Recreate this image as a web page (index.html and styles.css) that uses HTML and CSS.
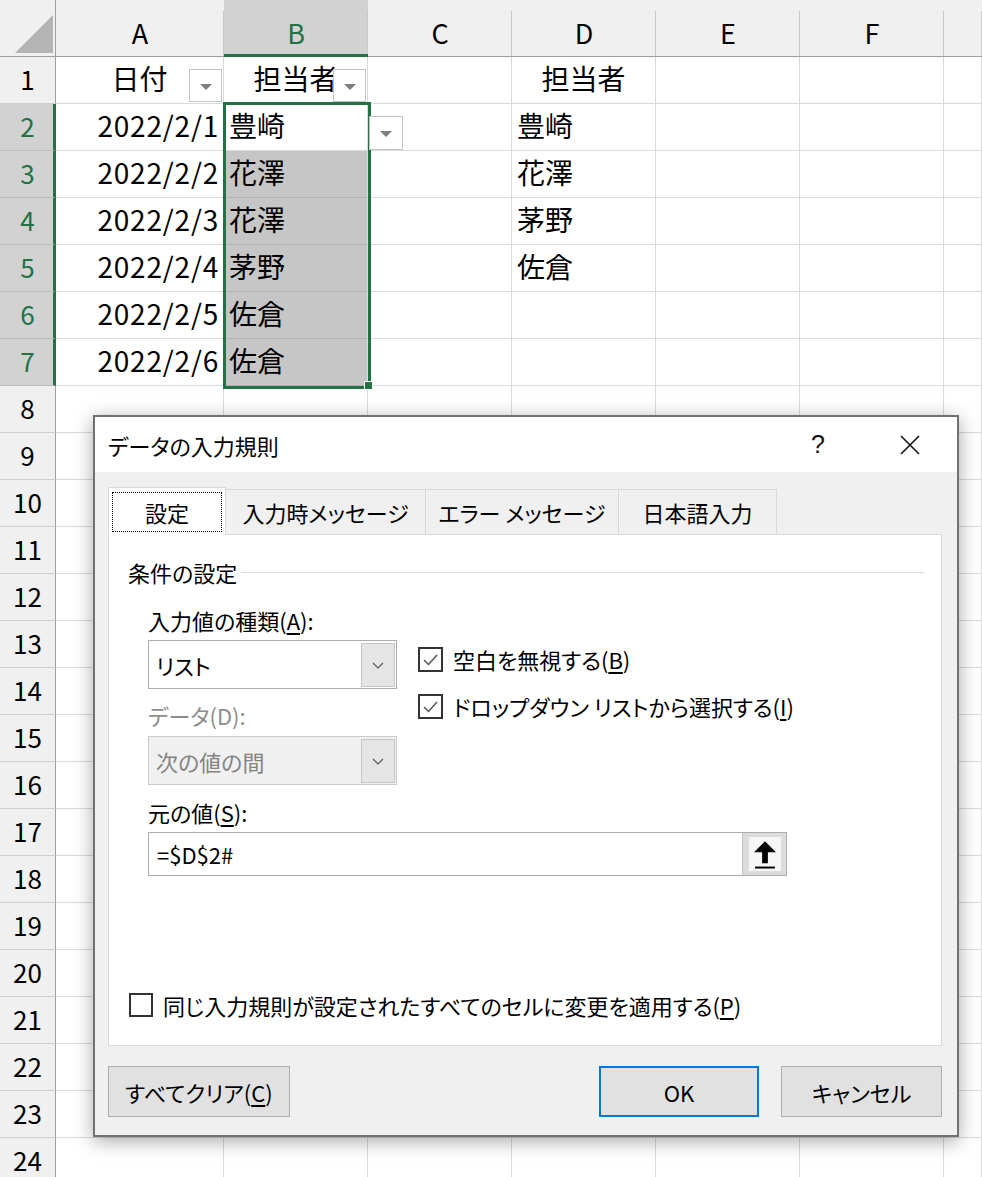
FILE: index.html
```html
<!DOCTYPE html>
<html lang="ja">
<head>
<meta charset="utf-8">
<title>データの入力規則</title>
<link rel="stylesheet" href="styles.css">
</head>
<body>
<div class="page">
  <div class="sheet">
    <div class="corner"><svg width="55" height="56" viewBox="0 0 55 56"><polygon points="15,53 53,53 53,15" fill="#b4b4b4"/></svg></div>
    <div class="colh">A</div>
    <div class="colh sel">B</div>
    <div class="colh">C</div>
    <div class="colh">D</div>
    <div class="colh">E</div>
    <div class="colh">F</div>
    <div class="colh"></div>

    <div class="rowh">1</div>
    <div class="cell center">日付<span class="filter"></span></div>
    <div class="cell center">担当者<span class="filter"></span></div>
    <div class="cell"></div>
    <div class="cell center">担当者</div>
    <div class="cell"></div><div class="cell"></div><div class="cell"></div>

    <div class="rowh sel">2</div>
    <div class="cell num">2022/2/1</div>
    <div class="cell">豊崎</div>
    <div class="cell"></div>
    <div class="cell">豊崎</div>
    <div class="cell"></div><div class="cell"></div><div class="cell"></div>

    <div class="rowh sel">3</div>
    <div class="cell num">2022/2/2</div>
    <div class="cell sel">花澤</div>
    <div class="cell"></div>
    <div class="cell">花澤</div>
    <div class="cell"></div><div class="cell"></div><div class="cell"></div>

    <div class="rowh sel">4</div>
    <div class="cell num">2022/2/3</div>
    <div class="cell sel">花澤</div>
    <div class="cell"></div>
    <div class="cell">茅野</div>
    <div class="cell"></div><div class="cell"></div><div class="cell"></div>

    <div class="rowh sel">5</div>
    <div class="cell num">2022/2/4</div>
    <div class="cell sel">茅野</div>
    <div class="cell"></div>
    <div class="cell">佐倉</div>
    <div class="cell"></div><div class="cell"></div><div class="cell"></div>

    <div class="rowh sel">6</div>
    <div class="cell num">2022/2/5</div>
    <div class="cell sel">佐倉</div>
    <div class="cell"></div><div class="cell"></div>
    <div class="cell"></div><div class="cell"></div><div class="cell"></div>

    <div class="rowh sel">7</div>
    <div class="cell num">2022/2/6</div>
    <div class="cell sel">佐倉</div>
    <div class="cell"></div><div class="cell"></div>
    <div class="cell"></div><div class="cell"></div><div class="cell"></div>

    <div class="rowh">8</div><div class="cell"></div><div class="cell"></div><div class="cell"></div><div class="cell"></div><div class="cell"></div><div class="cell"></div><div class="cell"></div>
    <div class="rowh">9</div><div class="cell"></div><div class="cell"></div><div class="cell"></div><div class="cell"></div><div class="cell"></div><div class="cell"></div><div class="cell"></div>
    <div class="rowh">10</div><div class="cell"></div><div class="cell"></div><div class="cell"></div><div class="cell"></div><div class="cell"></div><div class="cell"></div><div class="cell"></div>
    <div class="rowh">11</div><div class="cell"></div><div class="cell"></div><div class="cell"></div><div class="cell"></div><div class="cell"></div><div class="cell"></div><div class="cell"></div>
    <div class="rowh">12</div><div class="cell"></div><div class="cell"></div><div class="cell"></div><div class="cell"></div><div class="cell"></div><div class="cell"></div><div class="cell"></div>
    <div class="rowh">13</div><div class="cell"></div><div class="cell"></div><div class="cell"></div><div class="cell"></div><div class="cell"></div><div class="cell"></div><div class="cell"></div>
    <div class="rowh">14</div><div class="cell"></div><div class="cell"></div><div class="cell"></div><div class="cell"></div><div class="cell"></div><div class="cell"></div><div class="cell"></div>
    <div class="rowh">15</div><div class="cell"></div><div class="cell"></div><div class="cell"></div><div class="cell"></div><div class="cell"></div><div class="cell"></div><div class="cell"></div>
    <div class="rowh">16</div><div class="cell"></div><div class="cell"></div><div class="cell"></div><div class="cell"></div><div class="cell"></div><div class="cell"></div><div class="cell"></div>
    <div class="rowh">17</div><div class="cell"></div><div class="cell"></div><div class="cell"></div><div class="cell"></div><div class="cell"></div><div class="cell"></div><div class="cell"></div>
    <div class="rowh">18</div><div class="cell"></div><div class="cell"></div><div class="cell"></div><div class="cell"></div><div class="cell"></div><div class="cell"></div><div class="cell"></div>
    <div class="rowh">19</div><div class="cell"></div><div class="cell"></div><div class="cell"></div><div class="cell"></div><div class="cell"></div><div class="cell"></div><div class="cell"></div>
    <div class="rowh">20</div><div class="cell"></div><div class="cell"></div><div class="cell"></div><div class="cell"></div><div class="cell"></div><div class="cell"></div><div class="cell"></div>
    <div class="rowh">21</div><div class="cell"></div><div class="cell"></div><div class="cell"></div><div class="cell"></div><div class="cell"></div><div class="cell"></div><div class="cell"></div>
    <div class="rowh">22</div><div class="cell"></div><div class="cell"></div><div class="cell"></div><div class="cell"></div><div class="cell"></div><div class="cell"></div><div class="cell"></div>
    <div class="rowh">23</div><div class="cell"></div><div class="cell"></div><div class="cell"></div><div class="cell"></div><div class="cell"></div><div class="cell"></div><div class="cell"></div>
    <div class="rowh">24</div><div class="cell"></div><div class="cell"></div><div class="cell"></div><div class="cell"></div><div class="cell"></div><div class="cell"></div><div class="cell"></div>
  </div>

  <div class="selection"></div>
  <div class="fill-handle"></div>
  <div class="dv-button"></div>

  <div class="dialog">
    <div class="titlebar">
      <span class="title">データの入力規則</span>
      <span class="help">?</span>
      <span class="close"><svg viewBox="0 0 20 20"><path d="M1 1L19 19M19 1L1 19"/></svg></span>
    </div>
    <div class="dbody">
      <div class="tabs">
        <div class="tab t1 active"><span class="focus">設定</span></div>
        <div class="tab t2">入力時メッセージ</div>
        <div class="tab t3">エラー メッセージ</div>
        <div class="tab t4">日本語入力</div>
      </div>
      <div class="panel">
        <div class="group"><span>条件の設定</span></div>
        <div class="settings">
          <div class="left">
            <div class="label">入力値の種類(<u>A</u>):</div>
            <div class="combo"><span>リスト</span><span class="drop"><svg viewBox="0 0 12 7"><polyline points="1,1 6,6 11,1"/></svg></span></div>
            <div class="label disabled gap">データ(D):</div>
            <div class="combo disabled gap2"><span>次の値の間</span><span class="drop"><svg viewBox="0 0 12 7"><polyline points="1,1 6,6 11,1"/></svg></span></div>
          </div>
          <div class="right">
            <div class="check"><span class="box"><svg viewBox="0 0 17 17"><polyline points="2,9 6.5,13.5 15,4"/></svg></span><span>空白を無視する(<u>B</u>)</span></div>
            <div class="check"><span class="box"><svg viewBox="0 0 17 17"><polyline points="2,9 6.5,13.5 15,4"/></svg></span><span>ドロップダウン リストから選択する(<u>I</u>)</span></div>
          </div>
        </div>
        <div class="source">
          <div class="label">元の値(<u>S</u>):</div>
          <div class="field"><span>=$D$2#</span><span class="refbtn"><span class="refinner"><svg viewBox="0 0 20 25"><polygon points="10,0 20,10 12.6,10 12.6,20 7.4,20 7.4,10 0,10"/><rect x="1" y="23" width="18" height="1.8"/></svg></span></span></div>
        </div>
        <div class="check apply"><span class="box small"></span><span>同じ入力規則が設定されたすべてのセルに変更を適用する(<u>P</u>)</span></div>
      </div>
      <div class="buttons">
        <button class="btn clear">すべてクリア(<u>C</u>)</button>
        <button class="btn ok">OK</button>
        <button class="btn cancel">キャンセル</button>
      </div>
    </div>
  </div>
</div>
</body>
</html>
```

FILE: styles.css
```css
* { box-sizing: border-box; }
html, body { margin: 0; padding: 0; }
body {
  width: 982px;
  height: 1177px;
  overflow: hidden;
  background: #fff;
  font-family: "Noto Sans CJK JP", "Liberation Sans", sans-serif;
}
.page {
  position: relative;
  width: 982px;
  height: 1177px;
  overflow: hidden;
}

/* ---------- spreadsheet ---------- */
.sheet {
  display: grid;
  grid-template-columns: 56px 168px repeat(5, 144px) 38px;
  grid-template-rows: 57px repeat(24, 47px);
  font-size: 28px;
  color: #000;
}
.corner {
  background: #f0f0f0;
  border-right: 1px solid #9e9e9e;
  border-bottom: 1px solid #9e9e9e;
}
.corner svg { display: block; }
.colh {
  background: #f0f0f0 linear-gradient(#c8c8c8, #c8c8c8) right 11px / 1px calc(100% - 11px) no-repeat;
  border-bottom: 1px solid #9e9e9e;
  display: flex;
  align-items: center;
  justify-content: center;
  padding-top: 8px;
  font-size: 27px;
}
.colh.sel {
  background-color: #d2d2d2;
  color: #217346;
  border-bottom: 3px solid #217346;
  padding-top: 10px;
}
.rowh {
  background: #f0f0f0;
  border-right: 1px solid #9e9e9e;
  border-bottom: 1px solid #cfcfcf;
  display: flex;
  align-items: center;
  justify-content: center;
  padding-bottom: 4px;
  font-size: 26px;
}
.rowh.sel {
  background: #d2d2d2;
  color: #217346;
  border-right: 3px solid #217346;
  border-bottom-color: #bcbcbc;
  padding-left: 2px;
}
.cell {
  position: relative;
  border-right: 1px solid #dadada;
  border-bottom: 1px solid #dadada;
  line-height: 42px;
  white-space: nowrap;
  padding: 0 5px;
}
.cell.num {
  text-align: right;
  letter-spacing: 0.8px;
  padding-right: 4px;
}
.cell.center { text-align: center; }
.cell.sel {
  background: #c6c6c6;
  border-bottom-color: #b2b2b2;
}
.filter {
  position: absolute;
  right: 1px;
  top: 12px;
  width: 33px;
  height: 33px;
  border: 1px solid #c3c3c3;
  background: #fff;
}
.filter::after, .dv-button::after {
  content: "";
  position: absolute;
  left: 50%;
  top: 50%;
  margin-left: -6px;
  margin-top: -2px;
  border-left: 6px solid transparent;
  border-right: 6px solid transparent;
  border-top: 6px solid #7f7f7f;
}
.selection {
  position: absolute;
  left: 223px;
  top: 102px;
  width: 148px;
  height: 287px;
  border: 3px solid #217346;
  pointer-events: none;
}
.fill-handle {
  position: absolute;
  left: 364px;
  top: 381px;
  width: 9px;
  height: 9px;
  background: #217346;
  border: 1px solid #fff;
}
.dv-button {
  position: absolute;
  left: 369px;
  top: 116px;
  width: 34px;
  height: 34px;
  border: 1px solid #c3c3c3;
  background: #fff;
}

/* ---------- dialog ---------- */
.dialog {
  position: absolute;
  left: 93px;
  top: 415px;
  width: 866px;
  height: 722px;
  border: 2px solid #717171;
  background: #f0f0f0;
  box-shadow: 0 4px 18px rgba(0, 0, 0, 0.35);
  display: flex;
  flex-direction: column;
  font-family: "Noto Sans CJK JP", sans-serif;
  font-size: 22px;
  font-feature-settings: "palt";
  color: #000;
}
.titlebar {
  flex: none;
  height: 55px;
  background: #fff;
  display: flex;
  align-items: center;
  padding: 0 24px 0 13px;
}
.title { flex: 1; }
.help, .close {
  width: 46px;
  display: flex;
  align-items: center;
  justify-content: center;
}
.help {
  margin-right: 46px;
  font-family: "Liberation Sans", sans-serif;
  font-size: 25px;
  color: #111;
}
.close svg {
  width: 20px;
  height: 20px;
  fill: none;
  stroke: #1a1a1a;
  stroke-width: 1.7;
}
.dbody {
  flex: 1;
  display: flex;
  flex-direction: column;
  padding: 15px 15px 0 13px;
}
.tabs {
  position: relative;
  z-index: 1;
  display: flex;
  align-items: flex-end;
  height: 48px;
  margin-bottom: -1px;
}
.tab {
  height: 46px;
  border: 1px solid #d9d9d9;
  border-left: none;
  background: #f0f0f0;
  display: flex;
  align-items: center;
  justify-content: center;
}
.tab.active {
  height: 48px;
  background: #fff;
  border-left: 1px solid #d9d9d9;
  border-bottom-color: #fff;
  padding: 4px 3px 2px 3px;
}
.tab .focus {
  width: 100%;
  height: 100%;
  border: 1px dotted #000;
  display: flex;
  align-items: center;
  justify-content: center;
}
.t1 { width: 118px; }
.t2 { width: 200px; }
.t3 { width: 193px; }
.t4 { width: 158px; }

.panel {
  flex: none;
  height: 512px;
  background: #fff;
  border: 1px solid #d9d9d9;
  padding: 23px 17px 0 0;
}
.group {
  display: flex;
  align-items: center;
  gap: 4px;
  padding-left: 19px;
  line-height: 28px;
}
.group::after {
  content: "";
  flex: 1;
  height: 1px;
  background: #dcdcdc;
}
.settings {
  display: flex;
  margin-top: 20px;
  padding-left: 39px;
}
.left { width: 249px; flex: none; }
.label { line-height: 28px; white-space: nowrap; }
.label.disabled { color: #8d8d8d; }
.label.gap { margin-top: 12px; }
.combo {
  position: relative;
  height: 49px;
  margin-top: 6px;
  border: 1px solid #adadad;
  background: #fff;
  display: flex;
  align-items: center;
  padding-left: 7px;
}
.combo.disabled {
  background: #f0f0f0;
  border-color: #cccccc;
  color: #838383;
}
.combo.gap2 { margin-top: 7px; }
.combo .drop {
  position: absolute;
  right: 1px;
  top: 2px;
  bottom: 1px;
  width: 34px;
  background: #e5e5e5;
  border: 1px solid #c6c6c6;
  display: flex;
  align-items: center;
  justify-content: center;
}
.drop svg {
  width: 12px;
  height: 7px;
  fill: none;
  stroke: #555;
  stroke-width: 1.1;
}
.right {
  margin-left: 21px;
  padding-top: 39px;
  display: flex;
  flex-direction: column;
  gap: 19px;
}
.check {
  display: flex;
  align-items: center;
  gap: 10px;
  height: 28px;
  white-space: nowrap;
}
.box {
  flex: none;
  width: 25px;
  height: 25px;
  border: 2px solid #333;
  background: #fff;
  display: flex;
  align-items: center;
  justify-content: center;
}
.box.small { width: 24px; height: 24px; }
.box svg {
  width: 17px;
  height: 17px;
  fill: none;
  stroke: #555;
  stroke-width: 1.5;
}
.source {
  margin-top: 13px;
  padding-left: 39px;
}
.field {
  position: relative;
  width: 639px;
  height: 44px;
  margin-top: 6px;
  border: 1px solid #adadad;
  display: flex;
  align-items: center;
  padding-left: 8px;
}
.refbtn {
  position: absolute;
  right: 0;
  top: 0;
  bottom: 0;
  width: 44px;
  background: #dcdcdc;
  border-left: 1px solid #c4c4c4;
  display: flex;
  align-items: center;
  justify-content: center;
}
.refinner {
  width: 32px;
  height: 34px;
  background: #f7f7f7;
  display: flex;
  align-items: flex-end;
  justify-content: center;
  padding-bottom: 2px;
}
.refinner svg {
  width: 22px;
  height: 28px;
  fill: #000;
}
.apply {
  margin-top: 115px;
  padding-left: 20px;
}
.buttons {
  display: flex;
  margin-top: 20px;
  height: 51px;
}
.btn {
  font: inherit;
  font-feature-settings: "palt";
  color: #000;
  height: 51px;
  background: #e1e1e1;
  border: 1px solid #adadad;
  padding: 0;
}
.clear { width: 182px; }
.ok {
  width: 160px;
  margin-left: auto;
  border: 2px solid #0078d7;
}
.cancel {
  width: 161px;
  margin-left: 22px;
}
u { text-underline-offset: 3px; }
```
